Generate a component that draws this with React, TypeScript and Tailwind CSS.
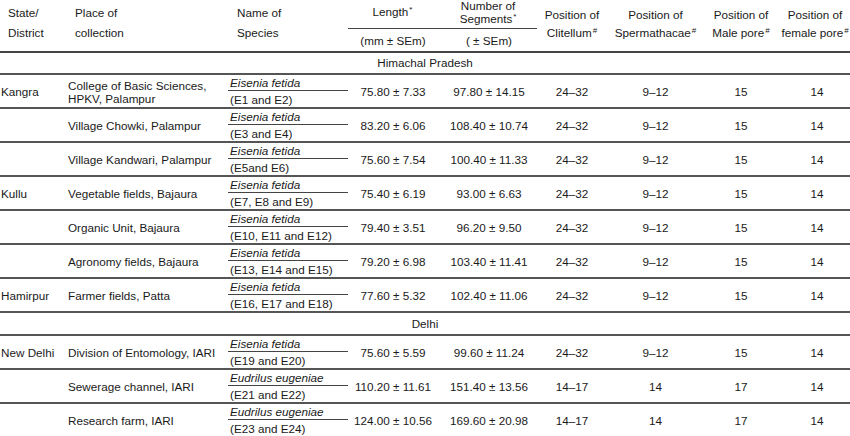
import React from "react";

type Row = {
  state?: string;
  place: string[];
  sp: string;
  code: string;
  len: string;
  seg: string;
  cl: string;
  sperm: string;
  male: string;
  fem: string;
};

const hp: Row[] = [
  { state: "Kangra", place: ["College of Basic Sciences,", "HPKV, Palampur"], sp: "Eisenia fetida", code: "(E1 and E2)", len: "75.80 ± 7.33", seg: "97.80 ± 14.15", cl: "24–32", sperm: "9–12", male: "15", fem: "14" },
  { place: ["Village Chowki, Palampur"], sp: "Eisenia fetida", code: "(E3 and E4)", len: "83.20 ± 6.06", seg: "108.40 ± 10.74", cl: "24–32", sperm: "9–12", male: "15", fem: "14" },
  { place: ["Village Kandwari, Palampur"], sp: "Eisenia fetida", code: "(E5and E6)", len: "75.60 ± 7.54", seg: "100.40 ± 11.33", cl: "24–32", sperm: "9–12", male: "15", fem: "14" },
  { state: "Kullu", place: ["Vegetable fields, Bajaura"], sp: "Eisenia fetida", code: "(E7, E8 and E9)", len: "75.40 ± 6.19", seg: "93.00 ± 6.63", cl: "24–32", sperm: "9–12", male: "15", fem: "14" },
  { place: ["Organic Unit, Bajaura"], sp: "Eisenia fetida", code: "(E10, E11 and E12)", len: "79.40 ± 3.51", seg: "96.20 ± 9.50", cl: "24–32", sperm: "9–12", male: "15", fem: "14" },
  { place: ["Agronomy fields, Bajaura"], sp: "Eisenia fetida", code: "(E13, E14 and E15)", len: "79.20 ± 6.98", seg: "103.40 ± 11.41", cl: "24–32", sperm: "9–12", male: "15", fem: "14" },
  { state: "Hamirpur", place: ["Farmer fields, Patta"], sp: "Eisenia fetida", code: "(E16, E17 and E18)", len: "77.60 ± 5.32", seg: "102.40 ± 11.06", cl: "24–32", sperm: "9–12", male: "15", fem: "14" },
];

const delhi: Row[] = [
  { state: "New Delhi", place: ["Division of Entomology, IARI"], sp: "Eisenia fetida", code: "(E19 and E20)", len: "75.60 ± 5.59", seg: "99.60 ± 11.24", cl: "24–32", sperm: "9–12", male: "15", fem: "14" },
  { place: ["Sewerage channel, IARI"], sp: "Eudrilus eugeniae", code: "(E21 and E22)", len: "110.20 ± 11.61", seg: "151.40 ± 13.56", cl: "14–17", sperm: "14", male: "17", fem: "14" },
  { place: ["Research farm, IARI"], sp: "Eudrilus eugeniae", code: "(E23 and E24)", len: "124.00 ± 10.56", seg: "169.60 ± 20.98", cl: "14–17", sperm: "14", male: "17", fem: "14" },
];

const cols = "grid grid-cols-[67px_158px_124px_88px_104px_62px_105px_66px_76px]";

function DataRow({ r, h }: { r: Row; h: string }) {
  return (
    <div className={`${cols} ${h} border-t-2 border-[#555]`}>
      <div className="flex items-center pl-[1px] whitespace-nowrap">{r.state}</div>
      <div className="flex flex-col justify-center pl-[1px] leading-[13px] whitespace-nowrap">
        {r.place.map((p) => (
          <span key={p}>{p}</span>
        ))}
      </div>
      <div className="flex flex-col">
        <div className="flex h-[16px] items-center pl-[2px] italic ml-[3px] mr-[1px] border-b border-[#444]">
          {r.sp}
        </div>
        <div className="flex flex-1 items-center pl-[5px]">{r.code}</div>
      </div>
      <div className="flex items-center justify-center whitespace-nowrap">{r.len}</div>
      <div className="flex items-center justify-center whitespace-nowrap">{r.seg}</div>
      <div className="flex items-center justify-center">{r.cl}</div>
      <div className="flex items-center justify-center">{r.sperm}</div>
      <div className="flex items-center justify-center">{r.male}</div>
      <div className="flex items-center justify-center pl-[10px]">{r.fem}</div>
    </div>
  );
}

function Sup({ c }: { c: string }) {
  return <sup className="text-[8px] relative -top-[4px] ml-[1px]">{c}</sup>;
}

export default function App() {
  return (
    <div
      className="w-[850px] h-[436px] overflow-hidden bg-white text-[#1a1a1a] text-[11.7px]"
      style={{ fontFamily: '"Liberation Sans", Arial, sans-serif' }}
    >
      {/* Header */}
      <div className={`${cols} h-[51px]`}>
        <div className="pl-[8px] pt-[3px] leading-[20px]">
          State/
          <br />
          District
        </div>
        <div className="pl-[8px] pt-[3px] leading-[20px]">
          Place of
          <br />
          collection
        </div>
        <div className="pl-[12px] pt-[3px] leading-[20px]">
          Name of
          <br />
          Species
        </div>
        <div className="col-span-2 flex flex-col">
          <div className="grid h-[29px] grid-cols-[88px_104px] border-b border-[#444] mr-[4px] -ml-[1px]">
            <div className="pt-[5px] pl-[1px] text-center leading-[14px]">
              Length<Sup c="*" />
            </div>
            <div className="-mt-[1px] text-center leading-[13px]">
              Number of
              <br />
              Segments<Sup c="*" />
            </div>
          </div>
          <div className="grid grid-cols-[88px_104px]">
            <div className="pt-[5px] text-center leading-[14px]">(mm ± SEm)</div>
            <div className="pt-[5px] text-center leading-[14px]">( ± SEm)</div>
          </div>
        </div>
        <div className="pt-[6px] text-center leading-[18px] whitespace-nowrap">
          Position of
          <br />
          Clitellum<Sup c="#" />
        </div>
        <div className="pt-[6px] text-center leading-[18px] whitespace-nowrap">
          Position of
          <br />
          Spermathacae<Sup c="#" />
        </div>
        <div className="pt-[6px] text-center leading-[18px] whitespace-nowrap">
          Position of
          <br />
          Male pore<Sup c="#" />
        </div>
        <div className="pt-[6px] pl-[6px] text-center leading-[18px] whitespace-nowrap">
          Position of
          <br />
          female pore<Sup c="#" />
        </div>
      </div>

      <div className="flex h-[22px] items-center justify-center border-t-2 border-[#444]">Himachal Pradesh</div>
      {hp.map((r, i) => (
        <DataRow key={i} r={r} h="h-[34px]" />
      ))}
      <div className="flex h-[23px] items-center justify-center border-t-2 border-[#555]">Delhi</div>
      {delhi.map((r, i) => (
        <DataRow key={i} r={r} h="h-[34px]" />
      ))}
    </div>
  );
}
